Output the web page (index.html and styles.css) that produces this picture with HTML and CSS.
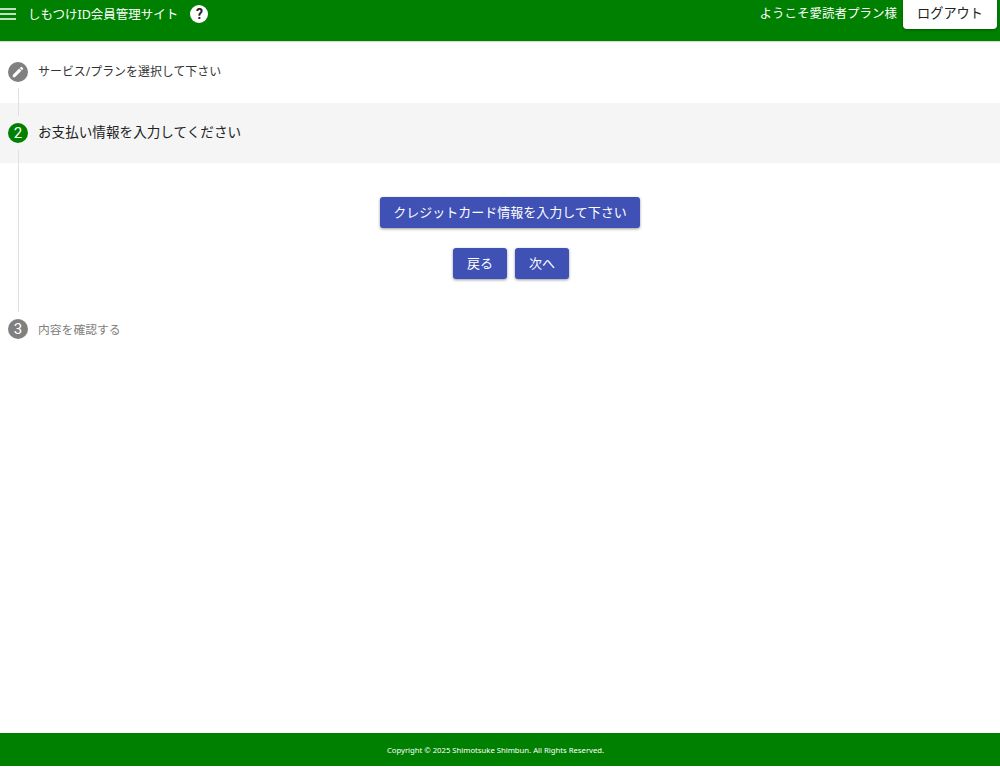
FILE: index.html
```html
<!DOCTYPE html>
<html lang="ja">
<head>
<meta charset="utf-8">
<title>しもつけID会員管理サイト</title>
<link rel="stylesheet" href="styles.css">
</head>
<body>
<div class="app">
  <header class="topbar">
    <div class="topbar-left">
      <svg class="menu-icon" width="16" height="12" viewBox="0 0 16 12" aria-hidden="true"><path d="M0 1h16M0 6h16M0 11h16" stroke="#fff" stroke-width="1.6"/></svg>
      <span class="site-title">しもつけID会員管理サイト</span>
      <span class="help-icon">?</span>
    </div>
    <div class="topbar-right">
      <span class="welcome">ようこそ愛読者プラン様</span>
      <button class="logout">ログアウト</button>
    </div>
  </header>
  <main class="stepper">
    <section class="step step-done">
      <span class="step-badge badge-grey">
        <svg width="14" height="14" viewBox="0 0 24 24" aria-hidden="true"><path fill="#fff" d="M3 17.25V21h3.75L17.81 9.94l-3.75-3.75L3 17.25zM20.71 7.04a1 1 0 0 0 0-1.41l-2.34-2.34a1 1 0 0 0-1.41 0l-1.83 1.83 3.75 3.75 1.83-1.83z"/></svg>
      </span>
      <span class="step-label">サービス/プランを選択して下さい</span>
    </section>
    <section class="step step-active">
      <span class="step-badge badge-green">2</span>
      <span class="step-label label-active">お支払い情報を入力してください</span>
    </section>
    <div class="step-content">
      <button class="action action-wide">クレジットカード情報を入力して下さい</button>
      <div class="action-row">
        <button class="action">戻る</button>
        <button class="action">次へ</button>
      </div>
    </div>
    <section class="step step-pending">
      <span class="step-badge badge-grey">3</span>
      <span class="step-label label-pending">内容を確認する</span>
    </section>
  </main>
  <footer class="footer">Copyright © 2025 Shimotsuke Shimbun. All Rights Reserved.</footer>
</div>
</body>
</html>
```
FILE: styles.css
```css
* { box-sizing: border-box; }
html, body { margin: 0; padding: 0; background: #fff; }
body {
  font-family: "Noto Sans", "Noto Sans CJK JP", sans-serif;
  color: #222;
  overflow: hidden;
}
.app { height: 766px; display: flex; flex-direction: column; }

.topbar {
  height: 41px;
  flex: none;
  background: #008000;
  color: #fff;
  display: flex;
  justify-content: space-between;
  align-items: flex-start;
  box-shadow: 0 1px 1px rgba(0,0,0,.15);
}
.topbar-left { display: flex; align-items: center; height: 28px; }
.site-title { font-size: 12.5px; margin-left: 12px; padding-bottom: 2px; }
.help-icon {
  width: 18px; height: 18px; margin-left: 12px;
  border-radius: 50%;
  background: #fff; color: #222;
  font: bold 14px/18px Roboto, sans-serif;
  text-align: center;
}
.topbar-right { display: flex; align-items: flex-start; padding-right: 3px; }
.welcome { font-size: 12.5px; line-height: 28px; margin-right: 6px; }
.logout {
  width: 94px; height: 29px; padding: 0 0 4px;
  border: 0; border-radius: 0 0 4px 4px;
  background: #fff; color: #222;
  font: 13.2px "Noto Sans CJK JP", sans-serif;
  box-shadow: 0 1px 3px rgba(0,0,0,.3);
}

.stepper { flex: 1; display: flex; flex-direction: column; }
.step { display: flex; align-items: center; padding-left: 8px; position: relative; }
.step-done { height: 62px; }
.step-done::after {
  content: ""; position: absolute; left: 18px; top: 47px;
  width: 1px; height: 28px; background: #e0e0e0; z-index: 1;
}
.step-active { height: 60px; background: #f5f5f5; }
.step-active::after {
  content: ""; position: absolute; left: 18px; top: 47px;
  width: 1px; height: 13px; background: #e0e0e0;
}
.step-pending { height: 34px; }
.step-badge {
  width: 20px; height: 20px; flex: none;
  border-radius: 50%;
  display: flex; align-items: center; justify-content: center;
  color: #fff;
  font: 15px Roboto, sans-serif;
}
.badge-grey { background: #808080; }
.badge-green { background: #008000; }
.step-label { margin-left: 10px; font-size: 11.95px; color: #333; padding-bottom: 3px; }
.label-active { font-size: 13.6px; color: #222; padding-bottom: 5px; }
.label-pending { font-size: 11.8px; color: #808080; padding-bottom: 2px; }

.step-content {
  height: 149px;
  margin-left: 18px;
  border-left: 1px solid #e0e0e0;
  padding: 34px 0 0 1px;
  display: flex; flex-direction: column; align-items: center; gap: 20px;
}
.action {
  height: 31px; padding: 0 0 3px;
  border: 0; border-radius: 3px;
  background: #3f51b5; color: #fff;
  font: 13px "Noto Sans CJK JP", sans-serif;
  box-shadow: 0 1px 3px rgba(0,0,0,.4);
}
.action-wide { width: 260px; }
.action-row { display: flex; gap: 8px; margin-left: 2px; }
.action-row .action { width: 54px; }

.footer {
  height: 33px; flex: none;
  background: #008000; color: #fff;
  display: flex; align-items: center; justify-content: center;
  font-size: 7.7px;
  padding-right: 9px;
}
```
